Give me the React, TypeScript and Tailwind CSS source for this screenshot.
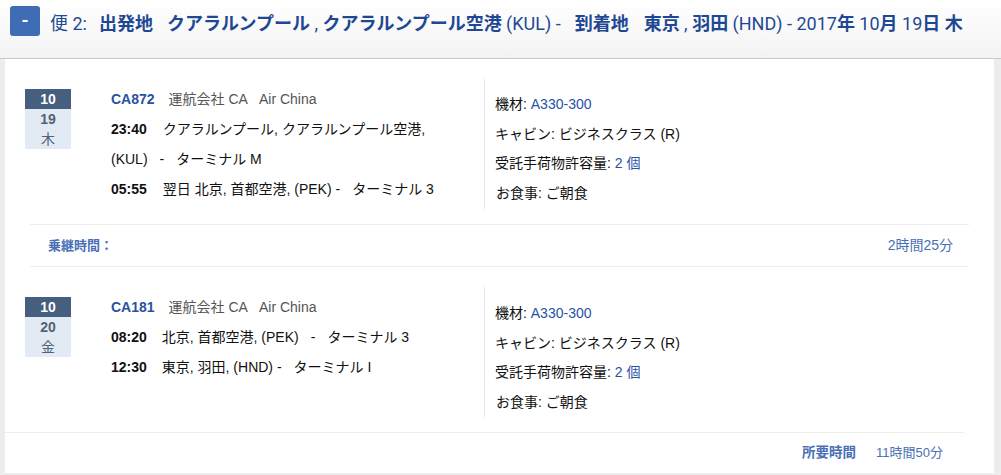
import React from "react";

const body = "font-['Liberation_Sans','Noto_Sans_CJK_JP',sans-serif]";

function DateBox({ m, d, w }: { m: string; d: string; w: string }) {
  return (
    <div className="w-[46px] text-[14px] text-center">
      <div className="h-[20px] leading-[20px] bg-[#465f7e] text-white font-bold">{m}</div>
      <div className="bg-[#e2eaf4] text-[#526277]">
        <div className="h-[20px] leading-[20px] font-bold">{d}</div>
        <div className="h-[20px] leading-[20px]">{w}</div>
      </div>
    </div>
  );
}

function Details({ pt }: { pt: string }) {
  return (
    <div className={`border-l border-[#e6e6e6] pl-[10px] ${pt} h-[130px] text-[14px] leading-[29.7px] text-[#111]`}>
      <div>
        機材: <span className="text-[#2a52a3]">A330-300</span>
      </div>
      <div>キャビン: ビジネスクラス (R)</div>
      <div>
        受託手荷物許容量: <span className="text-[#2a52a3]">2 個</span>
      </div>
      <div className="pl-[1px]">お食事: ご朝食</div>
    </div>
  );
}

function Segment({
  m,
  d,
  w,
  flight,
  lines,
  pt,
}: {
  m: string;
  d: string;
  w: string;
  flight: string;
  lines: React.ReactNode[];
  pt: string;
}) {
  return (
    <div className="flex pt-[20px] pb-[15px]">
      <div className="w-[106px] shrink-0 pl-[20px] pt-[10px]">
        <DateBox m={m} d={d} w={w} />
      </div>
      <div className="w-[373px] shrink-0 pt-[5px] text-[14px] leading-[30px] text-[#111]">
        <div className="whitespace-nowrap">
          <span className="font-bold text-[#2a52a3]">{flight}</span>
          <span className="ml-[14px] text-[#555]">運航会社 CA</span>
          <span className="ml-[11px] text-[#555]">Air China</span>
        </div>
        {lines.map((l, i) => (
          <div key={i} className="whitespace-nowrap">
            {l}
          </div>
        ))}
      </div>
      <Details pt={pt} />
    </div>
  );
}

export default function App() {
  return (
    <div className={`w-[1001px] h-[475px] bg-[#ededed] ${body}`}>
      <div className="flex items-start h-[59px] border-b border-[#c9c9c9] bg-linear-to-b from-white to-[#f3f3f3] pl-[10px] pt-[6px]">
        <div className="w-[30px] h-[30px] rounded-[3px] bg-[#3e6db5] flex items-center justify-center text-white font-bold text-[18px] leading-none font-['Roboto',sans-serif]">
          -
        </div>
        <div className="ml-[10px] pt-[3px] text-[18px] leading-[30px] text-[#1f4894] whitespace-nowrap font-['Roboto','Noto_Sans_CJK_JP',sans-serif]">
          <span>便 2:</span>
          <span className="ml-[12px] font-bold">出発地</span>
          <span className="ml-[14px] font-bold">クアラルンプール</span>
          <span> , </span>
          <span className="font-bold">クアラルンプール空港</span>
          <span> (KUL) -</span>
          <span className="ml-[14px] font-bold">到着地</span>
          <span className="ml-[15px] font-bold">東京</span>
          <span> , </span>
          <span className="font-bold">羽田</span>
          <span> (HND) - 2017</span>
          <span className="font-bold">年</span>
          <span> 10</span>
          <span className="font-bold">月</span>
          <span> 19</span>
          <span className="font-bold">日</span>
          <span> </span>
          <span className="font-bold">木</span>
        </div>
      </div>
      <div className="pl-[5px] pr-[7px] pb-[2px] h-[416px]">
        <div className="bg-white h-[414px]">
          <Segment
            m="10"
            d="19"
            w="木"
            flight="CA872"
            pt="pt-[11px]"
            lines={[
              <>
                <span className="font-bold">23:40</span>
                <span className="ml-[16px]">クアラルンプール, クアラルンプール空港,</span>
              </>,
              <>
                <span>(KUL)</span>
                <span className="ml-[12px]">-</span>
                <span className="ml-[12px]">ターミナル M</span>
              </>,
              <>
                <span className="font-bold">05:55</span>
                <span className="ml-[16px]">翌日 北京, 首都空港, (PEK) -</span>
                <span className="ml-[12px]">ターミナル 3</span>
              </>,
            ]}
          />
          <div className="mx-[25px] h-[43px] border-y border-[#ededed] flex items-center justify-between pl-[18px] pr-[16px] text-[#4a6fb5]">
            <span className="font-bold text-[13px]">乗継時間：</span>
            <span className="text-[14px]">2時間25分</span>
          </div>
          <Segment
            m="10"
            d="20"
            w="金"
            flight="CA181"
            pt="pt-[12px]"
            lines={[
              <>
                <span className="font-bold">08:20</span>
                <span className="ml-[15px]">北京, 首都空港, (PEK)</span>
                <span className="ml-[12px]">-</span>
                <span className="ml-[12px]">ターミナル 3</span>
              </>,
              <>
                <span className="font-bold">12:30</span>
                <span className="ml-[15px]">東京, 羽田, (HND) -</span>
                <span className="ml-[12px]">ターミナル I</span>
              </>,
            ]}
          />
          <div className="mr-[30px] h-[41px] border-t border-[#ededed] flex items-center justify-end pr-[21px] text-[13px] text-[#4a6fb5]">
            <span className="font-bold text-[13.5px]">所要時間</span>
            <span className="ml-[20px]">11時間50分</span>
          </div>
        </div>
      </div>
    </div>
  );
}
